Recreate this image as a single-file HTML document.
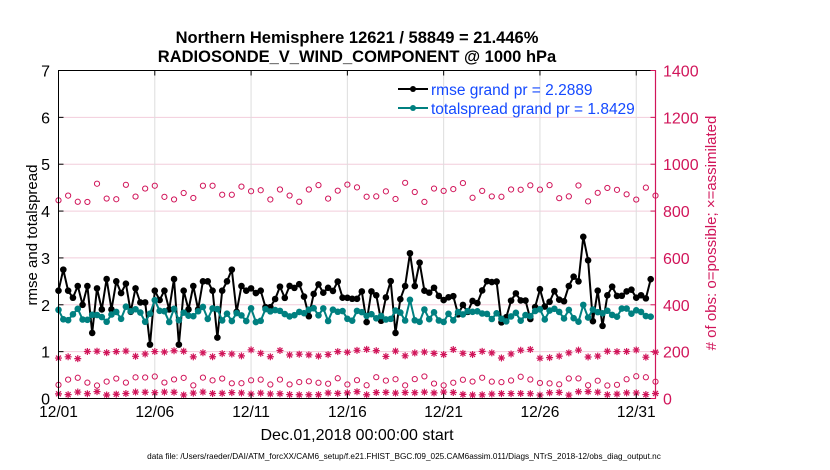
<!DOCTYPE html>
<html><head><meta charset="utf-8"><style>
html,body{margin:0;padding:0;background:#fff;width:830px;height:470px;overflow:hidden}
svg{display:block;font-family:"Liberation Sans",Arial,sans-serif}
</style></head><body>
<svg id="s" width="830" height="470" xmlns="http://www.w3.org/2000/svg">
<rect width="830" height="470" fill="#fff"/>
<g id="grid"></g>
<g id="data"></g>
<rect x="58.5" y="70.5" width="597" height="328" fill="none" stroke="#000" stroke-width="1"/>
<line x1="655.5" y1="70" x2="655.5" y2="399" stroke="#d1155a" stroke-width="1.2"/>
<g id="axes"></g>
<text x="357" y="43" text-anchor="middle" font-size="16.5" font-weight="bold">Northern Hemisphere 12621 / 58849 = 21.446%</text>
<text x="357" y="62" text-anchor="middle" font-size="16.5" font-weight="bold">RADIOSONDE_V_WIND_COMPONENT @ 1000 hPa</text>
<text transform="translate(37,235) rotate(-90)" text-anchor="middle" font-size="15">rmse and totalspread</text>
<text transform="translate(716,233) rotate(-90)" text-anchor="middle" font-size="15" fill="#d1155a"># of obs: o=possible; ×=assimilated</text>
<text x="357" y="440" text-anchor="middle" font-size="16">Dec.01,2018 00:00:00 start</text>
<text x="404" y="459" text-anchor="middle" font-size="8.2">data file: /Users/raeder/DAI/ATM_forcXX/CAM6_setup/f.e21.FHIST_BGC.f09_025.CAM6assim.011/Diags_NTrS_2018-12/obs_diag_output.nc</text>
<line x1="398" y1="89" x2="428" y2="89" stroke="#000" stroke-width="2"/><circle cx="413" cy="89" r="3" fill="#000"/>
<line x1="398" y1="108" x2="428" y2="108" stroke="#008080" stroke-width="2"/><circle cx="413" cy="108" r="3" fill="#008080"/>
<text x="431" y="95" font-size="15.5" fill="#1449ff">rmse grand pr = 2.2889</text>
<text x="431" y="114" font-size="15.5" fill="#1449ff">totalspread grand pr = 1.8429</text>
</svg>
<script>
var NS="http://www.w3.org/2000/svg";
function el(p,t,a,txt){var e=document.createElementNS(NS,t);for(var k in a)e.setAttribute(k,a[k]);if(txt!==undefined)e.textContent=txt;document.getElementById(p).appendChild(e);return e;}
var X0=58.5,X1=655.5,Y0=398.5,Y1=70.5,dpx=(X1-X0)/31;
function yv(v){return Y0-v*(Y0-Y1)/7;}
function yr(v){return Y0-v*(Y0-Y1)/1400;}
for(var i=1;i<7;i++){el("grid","line",{x1:X0,x2:X1,y1:yv(i),y2:yv(i),stroke:"#f2cddb","stroke-width":1});}
var labs=["12/01","12/06","12/11","12/16","12/21","12/26","12/31"];
for(var j=0;j<7;j++){var x=X0+j*5*dpx;
 if(j>0)el("grid","line",{x1:x,x2:x,y1:Y1,y2:Y0,stroke:"#ddd","stroke-width":1});
 el("axes","line",{x1:x,x2:x,y1:Y0,y2:Y0-5,stroke:"#000"});
 el("axes","line",{x1:x,x2:x,y1:Y1,y2:Y1+5,stroke:"#000"});
 el("axes","text",{x:x,y:417,"text-anchor":"middle","font-size":"15.5"},labs[j]);}
for(var i=0;i<=7;i++){var y=yv(i);
 el("axes","line",{x1:X0,x2:X0+5,y1:y,y2:y,stroke:"#000"});
 el("axes","line",{x1:X1-5,x2:X1,y1:y,y2:y,stroke:"#d1155a"});
 el("axes","text",{x:50,y:y+6,"text-anchor":"end","font-size":"16"},String(i));
 el("axes","text",{x:663,y:y+6,"font-size":"16",fill:"#d1155a"},String(i*200));}
var seed=7;function r(){seed=(seed*16807)%2147483647;return (seed-1)/2147483646;}
var rm=[2.3,2.75,2.3,2.15,2.4,2.0,2.4,1.4,2.35,1.9,2.55,1.9,2.5,2.25,2.45,1.85,2.35,2.05,2.05,1.15,2.3,2.1,2.3,1.9,2.55,1.15,2.3,1.9,2.4,1.9,2.5,2.5,2.3,1.3,2.3,2.5,2.75,1.85,2.4,2.3,2.35,2.25,2.3,1.95];
var N=124;
while(rm.length<N){var v=2.25+(r()-0.5)*0.6;if(r()<0.12)v=1.55+r()*0.3;rm.push(v);}
rm[70]=1.4;rm[72]=2.4;rm[73]=3.1;rm[74]=2.4;rm[75]=2.9;rm[76]=2.3;
rm[106]=2.4;rm[107]=2.6;rm[108]=2.5;rm[109]=3.45;rm[110]=2.95;rm[111]=1.65;rm[112]=2.3;rm[113]=1.55;
var sp=[];for(var k=0;k<N;k++){sp.push(1.78+(r()-0.5)*0.3+(r()<0.15?0.2:0));}
function series(arr,col){var pts=[];for(var k=0;k<arr.length;k++){pts.push((X0+k*dpx/4).toFixed(1)+","+yv(arr[k]).toFixed(1));}
 el("data","polyline",{points:pts.join(" "),fill:"none",stroke:col,"stroke-width":2});
 for(var k=0;k<arr.length;k++){el("data","circle",{cx:X0+k*dpx/4,cy:yv(arr[k]),r:3.3,fill:col});}}
series(rm,"#000");series(sp,"#008080");
function circ(x,v){el("data","circle",{cx:x,cy:yr(v),r:2.6,fill:"none",stroke:"#d1155a","stroke-width":1});}
function star(x,v){var y=yr(v),s=3.5,d="M"+(x-s)+" "+y+"h"+(2*s)+"M"+x+" "+(y-s)+"v"+(2*s)+"M"+(x-2.5)+" "+(y-2.5)+"l5 5M"+(x-2.5)+" "+(y+2.5)+"l5 -5";
 el("data","path",{d:d,stroke:"#d1155a","stroke-width":1.2,fill:"none"});}
for(var k=0;k<63;k++){var x=X0+k*dpx/2;
 circ(x,880+(r()-0.5)*90);
 star(x,190+(r()-0.5)*40);
 circ(x,75+(r()-0.5)*40);
 star(x,22+(r()-0.5)*15);}
</script>
</body></html>
